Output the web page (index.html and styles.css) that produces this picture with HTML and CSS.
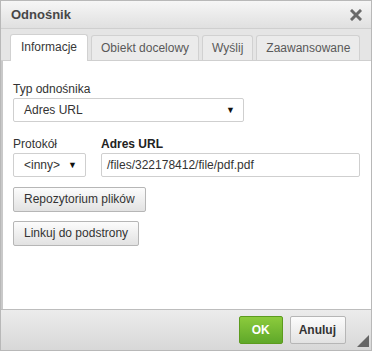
FILE: index.html
```html
<!DOCTYPE html>
<html lang="pl">
<head>
    <meta charset="UTF-8">
    <title>Odnośnik</title>
    <link rel="stylesheet" href="styles.css">
</head>
<body>
    <div class="dialog">
        <div class="title">
            <span>Odnośnik</span>
            <svg class="close" width="12" height="12" viewBox="0 0 12 12">
                <path d="M2 2 L10 10 M10 2 L2 10" stroke="#6a6a6a" stroke-width="3" stroke-linecap="square"/>
            </svg>
        </div>
        <div class="tabs">
            <span class="tab active">Informacje</span>
            <span class="tab">Obiekt docelowy</span>
            <span class="tab">Wyślij</span>
            <span class="tab">Zaawansowane</span>
        </div>
        <div class="content">
            <label class="lbl">Typ odnośnika</label>
            <div class="select wide">Adres URL<span class="arrow">▼</span></div>

            <div class="row">
                <div class="col">
                    <label class="lbl">Protokół</label>
                    <div class="select small">&lt;inny&gt;<span class="arrow">▼</span></div>
                </div>
                <div class="col grow">
                    <label class="lbl bold">Adres URL</label>
                    <div class="input">/files/322178412/file/pdf.pdf</div>
                </div>
            </div>

            <div class="btn">Repozytorium plików</div>
            <div class="btn">Linkuj do podstrony</div>
        </div>
        <div class="footer">
            <div class="btn ok">OK</div>
            <div class="btn cancel">Anuluj</div>
            <span class="resize"></span>
        </div>
    </div>
</body>
</html>
```

FILE: styles.css
```css
body {
    margin: 0;
    font-family: Arial, "Liberation Sans", sans-serif;
    font-size: 12px;
    color: #333;
}

.dialog {
    width: 372px;
    height: 351px;
    display: flex;
    flex-direction: column;
    box-sizing: border-box;
    border: 1px solid #b8b8b8;
    background: #fff;
}

.title {
    height: 27px;
    display: flex;
    align-items: center;
    justify-content: space-between;
    padding: 0 9px 0 10px;
    background: linear-gradient(#f6f6f6, #e0e0e0);
    border-bottom: 1px solid #cfcfcf;
    font-size: 13px;
    font-weight: bold;
    color: #474747;
}

.tabs {
    display: flex;
    gap: 3px;
    padding: 5px 9px 0;
    background: #e5e5e5;
    border-bottom: 1px solid #cfcfcf;
    height: 26px;
    align-items: flex-end;
}

.tab {
    height: 25px;
    line-height: 24px;
    padding: 0 9px;
    background: #ebebeb;
    border: 1px solid #d1d1d1;
    border-bottom: none;
    border-radius: 3px 3px 0 0;
    font-size: 12px;
    color: #595959;
    white-space: nowrap;
    box-sizing: border-box;
}

.tab.active {
    background: #fff;
    height: 27px;
    margin-bottom: -1px;
    color: #383838;
    padding: 0 10px;
}

.content {
    flex: 1;
    padding: 21px 10px 0;
    border-left: 2px solid #c9c9c9;
}

.lbl {
    display: block;
    font-size: 12px;
    line-height: 15px;
    color: #333;
}

.lbl.bold {
    font-weight: bold;
    color: #222;
}

.select, .input {
    position: relative;
    box-sizing: border-box;
    height: 24px;
    line-height: 22px;
    border: 1px solid #cfcfcf;
    border-radius: 2px;
    padding: 0 10px;
    font-size: 12px;
    color: #333;
    background: #fff;
}

.select.wide {
    width: 231px;
    margin-top: 1px;
}

.select.small {
    width: 73px;
    margin-top: 1px;
}

.arrow {
    position: absolute;
    right: 8px;
    top: 0;
    font-size: 9px;
    color: #111;
}

.row {
    display: flex;
    gap: 15px;
    margin-top: 15px;
}

.grow {
    flex: 1;
    padding-right: 1px;
}

.input {
    margin-top: 1px;
    padding: 0 5px;
}

.btn {
    display: inline-block;
    box-sizing: border-box;
    height: 25px;
    line-height: 23px;
    padding: 0 10px;
    border: 1px solid #b6b6b6;
    border-radius: 2px;
    background: linear-gradient(#fcfcfc, #e2e2e2);
    font-size: 12px;
    color: #333;
}

.content .btn {
    display: block;
    width: max-content;
    margin-top: 9px;
}

.content .row + .btn {
    margin-top: 10px;
}

.footer {
    position: relative;
    height: 40px;
    display: flex;
    justify-content: flex-end;
    align-items: center;
    gap: 7px;
    padding: 0 25px 0 0;
    background: linear-gradient(#ececec, #d8d8d8);
    border-top: 1px solid #bdbdbd;
}

.btn.ok {
    height: 28px;
    line-height: 26px;
    padding: 0 12px;
    border-color: #5c9b1e;
    background: linear-gradient(#8ccb3c, #5fa82a);
    color: #fff;
    font-weight: bold;
}

.btn.cancel {
    height: 28px;
    line-height: 26px;
    padding: 0 9px 0 8px;
    font-weight: bold;
    color: #333;
}

.resize {
    position: absolute;
    right: 2px;
    bottom: 3px;
    width: 0;
    height: 0;
    border-left: 12px solid transparent;
    border-bottom: 12px solid #666;
}
```
